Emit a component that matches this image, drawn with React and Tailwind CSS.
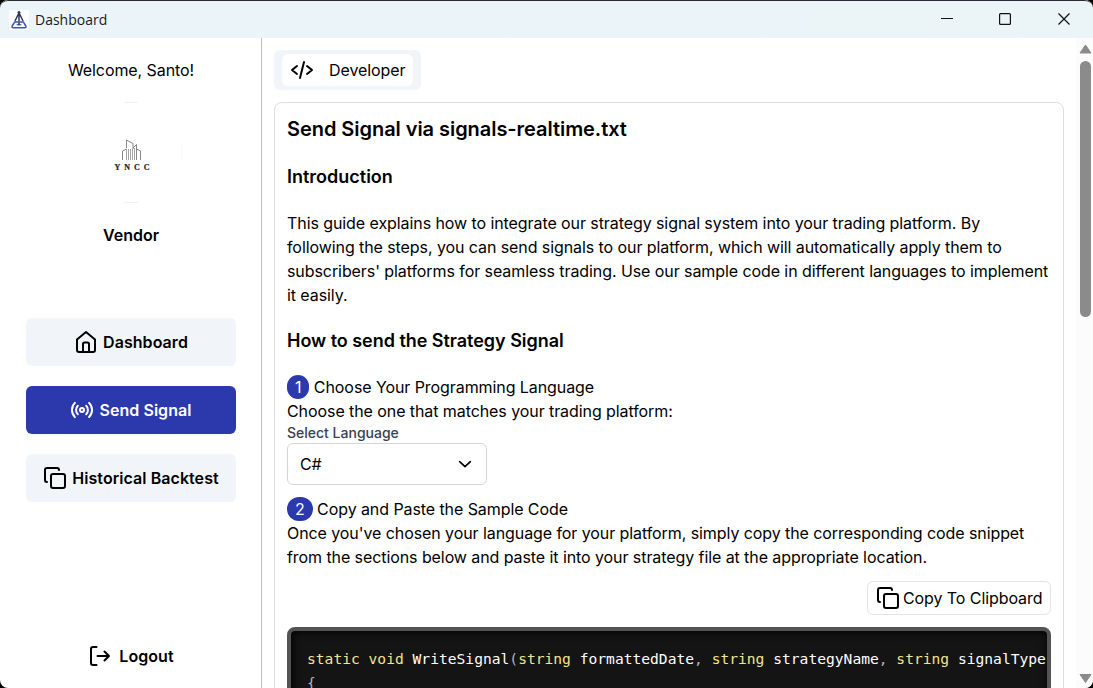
import React from "react";
import { Copy } from "lucide-react";

function Stroke({ size = 24, width = 2, className = "", children }) {
  return (
    <svg width={size} height={size} viewBox="0 0 24 24" fill="none" stroke="currentColor" strokeWidth={width} strokeLinecap="round" strokeLinejoin="round" className={`shrink-0 ${className}`}>
      {children}
    </svg>
  );
}

function TitleBar() {
  return (
    <header className="flex h-[38px] shrink-0 items-center rounded-t-[8px] border-t border-[#2f2a33] bg-linear-to-r from-[#ebf4f8] via-[#ebf4f8] to-[#ebf5f7] pl-[9px]">
      <svg width="20" height="20" viewBox="0 0 20 20" className="shrink-0 bg-white" fill="none" strokeLinecap="round" strokeLinejoin="round">
        <circle cx="10" cy="2.6" r="1.500" fill="#27365f" />
        <path d="M10 3v11.500M9.200 4.500 6.200 10.500M10.800 4.500l3 6" stroke="#27365f" strokeWidth="1.500" />
        <path d="M5.500 12h3M11.500 12h3M5 13 3.200 16q-.7 1.700 1 1.700h11.600q1.700 0 1-1.700L15 13" stroke="#3a52c4" strokeWidth="1.500" />
        <path d="M8 14.800h4" stroke="#27365f" />
      </svg>
      <span className="ml-[6px] font-['Open_Sans',sans-serif] text-[14px] text-[#1a1a1a]">Dashboard</span>
      <svg width="130" height="14" viewBox="0 0 130 14" className="mr-[22px] ml-auto" fill="none" stroke="#111" strokeWidth="1.200">
        <path d="M0 5.500h12" strokeWidth="1" />
        <rect x="58.600" y="0.600" width="10.800" height="10.800" rx="1" />
        <path d="M117.500 .5l11 11M128.500 .5l-11 11" />
      </svg>
    </header>
  );
}

function VendorLogo() {
  return (
    <div className="mt-[20px] flex h-[101px] w-[101px] flex-col items-center justify-center">
      <svg width="101" height="101" viewBox="0 0 101 101" fill="none">
        <path d="M43 .5h14M43 100.500h14" stroke="#f0f0f5" />
        <path d="M100.500 42v16" stroke="#fafafc" />
        <g stroke="#777" strokeWidth=".9">
          <path d="M41.500 58V49l4-2M45.500 46v-8l6.500 3.500V47M52 46l3.500-3.500V58M55.500 47l4 2v9" />
          <path d="M45.500 47v11M47.500 47v11M49.500 47v11M51.500 47v11M53.500 46v12" stroke="#999" />
        </g>
        <text x="33.500" y="68" fontFamily="Liberation Serif, serif" fontWeight="700" fontSize="8" textLength="35" fill="#222" stroke="#222" strokeWidth=".2">YNCC</text>
      </svg>
    </div>
  );
}

function NavButton({ active, icon, label }) {
  return (
    <button className={`flex h-12 w-[210px] items-center justify-center gap-[5px] rounded-md font-semibold tracking-[0.06px] ${active ? "bg-[#2c39ad] text-white" : "bg-[#f1f5f9]"}`}>
      {icon}
      {label}
    </button>
  );
}

function Sidebar() {
  return (
    <aside className="flex w-[262px] shrink-0 flex-col items-center border-r border-[#bdbdbd] pl-px">
      <p className="mt-5 tracking-[-0.08px]">Welcome, Santo!</p>
      <VendorLogo />
      <p className="mt-5 font-semibold">Vendor</p>
      <nav className="mt-[71px] flex flex-col gap-5">
        <NavButton
          label="Dashboard"
          icon={
            <Stroke>
              <path d="M3 9.500l9-7.500 9 7.500V20a2 2 0 0 1-2 2H5a2 2 0 0 1-2-2z" />
              <path d="M9 22v-8a1.500 1.500 0 0 1 1.500-1.500h3A1.500 1.500 0 0 1 15 14v8" />
            </Stroke>
          }
        />
        <NavButton
          active
          label="Send Signal"
          icon={
            <Stroke>
              <circle cx="12" cy="12" r="2" />
              <path d="M4.900 19.100C1 15.200 1 8.800 4.900 4.900M7.800 16.200c-2.300-2.300-2.300-6.100 0-8.500M16.200 7.800c2.300 2.300 2.300 6.100 0 8.500M19.100 4.900C23 8.800 23 15.100 19.100 19" />
            </Stroke>
          }
        />
        <NavButton label="Historical Backtest" icon={<Copy size={24} />} />
      </nav>
      <button className="mt-auto mb-5 flex items-center gap-[7px] font-semibold tracking-[0.06px]">
        <Stroke>
          <path d="M8.500 3H5a2 2 0 0 0-2 2v14a2 2 0 0 0 2 2h3.500M9.500 12H21M16.500 7.500 21 12l-4.500 4.500" />
        </Stroke>
        Logout
      </button>
    </aside>
  );
}

function Step({ n, children }) {
  return (
    <p>
      <span className="inline-block rounded-full bg-[#2c39ad] px-2 text-white">{n}</span> {children}
    </p>
  );
}

function CodeBlock() {
  const key = "text-[#f0e68c]";
  return (
    <div className="mt-3 h-[120px] overflow-hidden rounded-[8px] border-4 border-[#545454] bg-[#141414] px-4 pt-[16px] font-['DejaVu_Sans_Mono',monospace] text-[14.610px] leading-6 tracking-normal whitespace-pre text-white shadow-[inset_1px_1px_8px_black]">
      <div>
        <span className={key}>static void</span> WriteSignal<span className="text-[#b5b5b5]">(</span>
        <span className={key}>string</span> formattedDate<span className="text-[#b5b5b5]">,</span> <span className={key}>string</span> strategyName
        <span className="text-[#b5b5b5]">,</span> <span className={key}>string</span> signalType
      </div>
      <div className="text-[#b5b5b5]">{"{"}</div>
    </div>
  );
}

function Content() {
  return (
    <main className="min-w-0 flex-1 overflow-hidden pt-3 pr-3 pl-3 tracking-[-0.08px]">
      <div className="flex h-10 w-[147px] items-center rounded-md bg-[#f1f5f9] px-2">
        <button className="flex h-8 w-[131px] items-center gap-[15px] rounded-md bg-white pl-2">
          <Stroke>
            <path d="M17 8l5 4-5 4M7 8l-5 4 5 4M14 4l-4 16" />
          </Stroke>
          Developer
        </button>
      </div>
      <section className="mt-3 h-[640px] rounded-lg border border-[#dcdde1] px-3 pt-3">
        <h1 className="text-xl leading-7 font-semibold tracking-[-0.05px]">Send Signal via signals-realtime.txt</h1>
        <h2 className="mt-5 text-lg leading-7 font-semibold tracking-normal">Introduction</h2>
        <p className="mt-5">
          This guide explains how to integrate our strategy signal system into your trading platform. By following the steps, you can send signals to our platform, which will automatically apply them to subscribers' platforms for seamless trading. Use our sample code in different languages to implement it easily.
        </p>
        <h2 className="mt-5 text-lg leading-7 font-semibold tracking-[-0.03px]">How to send the Strategy Signal</h2>
        <div className="mt-5">
          <Step n="1">Choose Your Programming Language</Step>
        </div>
        <p>Choose the one that matches your trading platform:</p>
        <label className="block text-sm leading-5 font-medium tracking-normal text-[#374151]">Select Language</label>
        <button className="flex h-[42px] w-[200px] items-center justify-between rounded-md border border-[#d1d5db] pr-[13px] pl-3">
          C#
          <Stroke size={16}>
            <path d="M4 8.500l8 7.500 8-7.500" strokeWidth="2.500" />
          </Stroke>
        </button>
        <div className="mt-3">
          <Step n="2">Copy and Paste the Sample Code</Step>
        </div>
        <p>Once you've chosen your language for your platform, simply copy the corresponding code snippet from the sections below and paste it into your strategy file at the appropriate location.</p>
        <button className="mt-3 ml-auto flex h-[34px] w-[184px] items-center gap-[3px] rounded-md border border-[#e2e4e8] pl-2">
          <Copy size={24} />
          Copy To Clipboard
        </button>
        <CodeBlock />
      </section>
    </main>
  );
}

function ScrollBar() {
  return (
    <div className="flex w-[17px] shrink-0 flex-col items-center bg-[#fcfcfc]">
      <svg width="17" height="23" viewBox="0 0 17 23" fill="#8b8b8b" stroke="#8b8b8b" strokeLinejoin="round">
        <path d="M9.500 7l5.500 8H4z" />
      </svg>
      <div className="ml-[2px] h-[256px] w-[11px] rounded-full bg-[#8b8b8b]" />
      <svg width="17" height="17" viewBox="0 0 17 17" fill="#8b8b8b" stroke="#8b8b8b" strokeLinejoin="round" className="mt-auto">
        <path d="M9.500 11.500 4 3.500h11z" />
      </svg>
    </div>
  );
}

export default function App() {
  return (
    <div className="h-[688px] w-[1093px] overflow-hidden bg-black">
      <div className="flex h-full flex-col overflow-hidden rounded-lg bg-white font-['Inter',sans-serif] text-base leading-6 text-black">
        <TitleBar />
        <div className="flex min-h-0 flex-1">
          <Sidebar />
          <Content />
          <ScrollBar />
        </div>
      </div>
    </div>
  );
}
